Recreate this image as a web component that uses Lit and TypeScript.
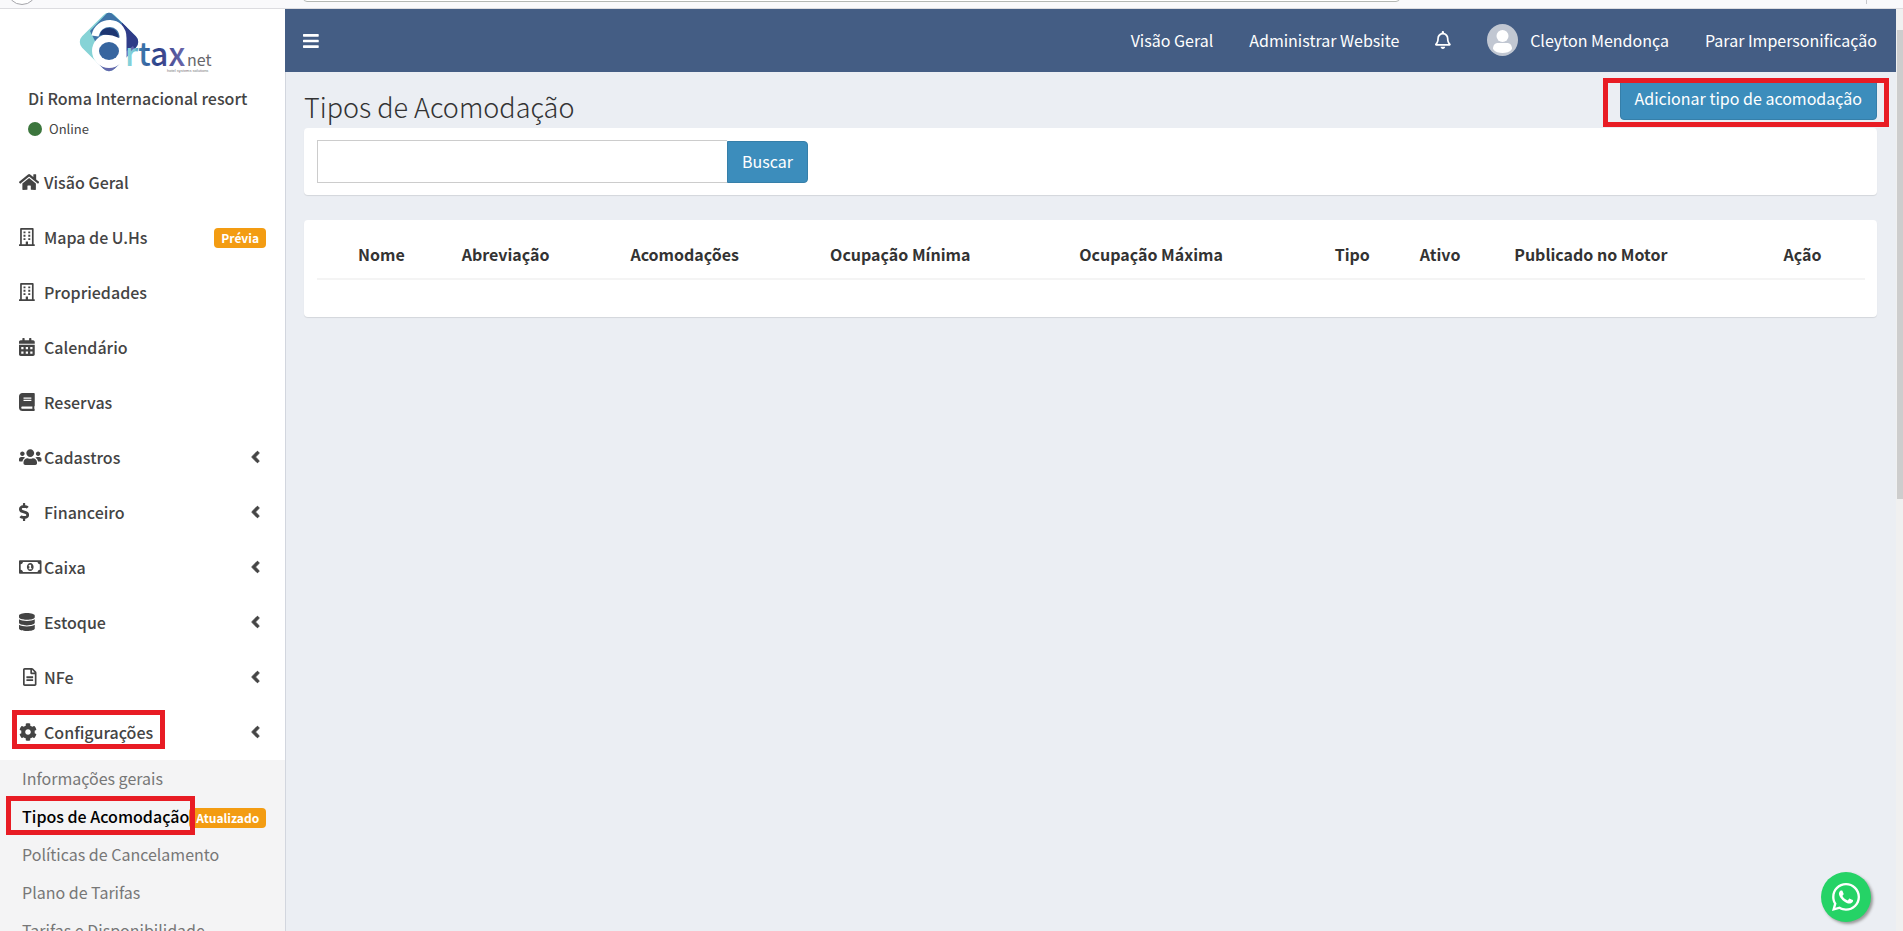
import { LitElement, html, css, svg, nothing, type TemplateResult } from "lit";
import { customElement, property } from "lit/decorators.js";
import { classMap } from "lit/directives/class-map.js";

interface Glyph {
  w: number;
  body: TemplateResult;
}

const glyphs: Record<string, Glyph> = {
  bars: {
    w: 448,
    body: svg`<path d="M16 132h416c8.8 0 16-7.2 16-16V76c0-8.8-7.2-16-16-16H16C7.2 60 0 67.200 0 76v40c0 8.800 7.200 16 16 16zm0 160h416c8.800 0 16-7.200 16-16v-40c0-8.800-7.200-16-16-16H16c-8.800 0-16 7.200-16 16v40c0 8.800 7.200 16 16 16zm0 160h416c8.800 0 16-7.200 16-16v-40c0-8.800-7.200-16-16-16H16c-8.800 0-16 7.200-16 16v40c0 8.800 7.200 16 16 16z"/>`,
  },
  home: {
    w: 576,
    body: svg`<path d="M280.37 148.26L96 300.11V464a16 16 0 0 0 16 16l112.06-.29a16 16 0 0 0 15.92-16V368a16 16 0 0 1 16-16h64a16 16 0 0 1 16 16v95.64a16 16 0 0 0 16 16.05L464 480a16 16 0 0 0 16-16V300L295.67 148.26a12.19 12.19 0 0 0-15.3 0zM571.6 251.47L488 182.56V44.05a12 12 0 0 0-12-12h-56a12 12 0 0 0-12 12v72.61L318.47 43a48 48 0 0 0-61 0L4.34 251.47a12 12 0 0 0-1.6 16.9l25.5 31A12 12 0 0 0 45.15 301l235.22-193.74a12.19 12.19 0 0 1 15.3 0L530.9 301a12 12 0 0 0 16.9-1.6l25.5-31a12 12 0 0 0-1.7-16.93z"/>`,
  },
  building: {
    w: 448,
    body: svg`<path fill-rule="evenodd" d="M56 0h336c13 0 24 11 24 24v440h20c7 0 12 5 12 12v36H0v-36c0-7 5-12 12-12h20V24C32 11 43 0 56 0zM80 48v415h112v-67c0-7 5-12 12-12h40c7 0 12 5 12 12v67h112V48z"/>
      <path d="M128 96h56v56h-56zM264 96h56v56h-56zM128 192h56v56h-56zM264 192h56v56h-56zM128 288h56v56h-56zM264 288h56v56h-56z"/>`,
  },
  calendar: {
    w: 448,
    body: svg`<path fill-rule="evenodd" d="M0 464c0 26.500 21.500 48 48 48h352c26.500 0 48-21.500 48-48V192H0zM64 256h64v64H64zM192 256h64v64h-64zM320 256h64v64h-64zM64 384h64v64H64zM192 384h64v64h-64zM320 384h64v64h-64zM400 64h-48V16c0-8.800-7.200-16-16-16h-32c-8.800 0-16 7.200-16 16v48H160V16c0-8.800-7.200-16-16-16h-32c-8.800 0-16 7.200-16 16v48H48C21.500 64 0 85.500 0 112v48h448v-48c0-26.500-21.500-48-48-48z"/>`,
  },
  book: {
    w: 448,
    body: svg`<path d="M448 360V24c0-13.3-10.700-24-24-24H96C43 0 0 43 0 96v320c0 53 43 96 96 96h328c13.300 0 24-10.700 24-24v-16c0-7.500-3.500-14.300-8.900-18.700-4.200-15.400-4.200-59.300 0-74.700 5.400-4.300 8.900-11.100 8.900-18.600zM128 134c0-3.300 2.700-6 6-6h212c3.300 0 6 2.700 6 6v20c0 3.300-2.700 6-6 6H134c-3.300 0-6-2.700-6-6v-20zm0 64c0-3.300 2.700-6 6-6h212c3.300 0 6 2.700 6 6v20c0 3.300-2.700 6-6 6H134c-3.300 0-6-2.700-6-6v-20zm253.400 250H96c-17.700 0-32-14.300-32-32 0-17.600 14.400-32 32-32h285.400c-1.900 17.100-1.900 46.900 0 64z"/>`,
  },
  users: {
    w: 640,
    body: svg`<path d="M96 224c35.300 0 64-28.700 64-64s-28.700-64-64-64-64 28.700-64 64 28.700 64 64 64zm448 0c35.300 0 64-28.700 64-64s-28.700-64-64-64-64 28.700-64 64 28.700 64 64 64zm32 32h-64c-17.600 0-33.500 7.100-45.100 18.600 40.300 22.100 68.900 62 75.100 109.400h66c17.700 0 32-14.300 32-32v-32c0-35.300-28.700-64-64-64zm-256 0c61.900 0 112-50.100 112-112S381.900 32 320 32 208 82.100 208 144s50.100 112 112 112zm76.800 32h-8.300c-20.800 10-43.900 16-68.500 16s-47.600-6-68.500-16h-8.300C179.600 288 128 339.600 128 403.200V432c0 26.500 21.500 48 48 48h288c26.500 0 48-21.500 48-48v-28.800c0-63.600-51.600-115.200-115.200-115.200zm-223.700-13.400C161.500 263.100 145.600 256 128 256H64c-35.300 0-64 28.700-64 64v32c0 17.700 14.300 32 32 32h65.900c6.300-47.400 34.900-87.300 75.200-109.400z"/>`,
  },
  dollar: {
    w: 288,
    body: svg`<path d="M209.200 233.400l-108-31.600C88.700 198.200 80 186.500 80 173.500c0-16.300 13.200-29.500 29.500-29.500h66.300c12.200 0 24.200 3.700 34.200 10.500 6.100 4.100 14.300 3.100 19.500-2l34.800-34c7.100-6.900 6.100-18.400-1.800-24.500C238 74.800 207.400 64.100 176 64V16c0-8.800-7.200-16-16-16h-32c-8.800 0-16 7.200-16 16v48h-2.500C45.800 64-5.400 118.700.5 183.600c4.200 46.100 39.400 83.600 83.800 96.600l102.500 30c12.500 3.700 21.200 15.300 21.200 28.300 0 16.300-13.200 29.500-29.500 29.500h-66.300C100 368 88 364.300 78 357.500c-6.100-4.100-14.300-3.100-19.500 2l-34.800 34c-7.100 6.900-6.100 18.400 1.800 24.500 24.500 19.200 55.100 29.900 86.500 30v48c0 8.800 7.200 16 16 16h32c8.800 0 16-7.200 16-16v-48.200c46.600-.9 90.300-28.600 105.700-72.700 21.500-61.600-14.600-124.800-72.500-141.700z"/>`,
  },
  money: {
    w: 640,
    body: svg`<path fill-rule="evenodd" d="M32 64h576c18 0 32 14 32 32v320c0 18-14 32-32 32H32c-18 0-32-14-32-32V96c0-18 14-32 32-32zM112 112c0 35-29 64-64 64v160c35 0 64 29 64 64h416c0-35 29-64 64-64V176c-35 0-64-29-64-64z"/>
      <path fill-rule="evenodd" d="M320 144c53 0 96 50 96 112s-43 112-96 112-96-50-96-112 43-112 96-112zM300 192l-24 16v24h20v56h-20v32h88v-32h-20v-96z"/>`,
  },
  database: {
    w: 448,
    body: svg`<path d="M448 73.143v45.714C448 159.143 347.667 192 224 192S0 159.143 0 118.857V73.143C0 32.857 100.333 0 224 0s224 32.857 224 73.143zM448 176v102.857C448 319.143 347.667 352 224 352S0 319.143 0 278.857V176c48.125 33.143 136.208 48.572 224 48.572S399.874 209.143 448 176zm0 160v102.857C448 479.143 347.667 512 224 512S0 479.143 0 438.857V336c48.125 33.143 136.208 48.572 224 48.572S399.874 369.143 448 336z"/>`,
  },
  file: {
    w: 384,
    body: svg`<path d="M288 248v28c0 6.600-5.400 12-12 12H108c-6.600 0-12-5.400-12-12v-28c0-6.600 5.400-12 12-12h168c6.600 0 12 5.400 12 12zm-12 72H108c-6.600 0-12 5.400-12 12v28c0 6.600 5.400 12 12 12h168c6.600 0 12-5.400 12-12v-28c0-6.600-5.400-12-12-12zm108-188.100V464c0 26.500-21.500 48-48 48H48c-26.500 0-48-21.500-48-48V48C0 21.500 21.500 0 48 0h204.100C264.800 0 277 5.100 286 14.100L369.900 98c9 8.900 14.100 21.200 14.100 33.900zm-128-80V128h76.100L256 51.900zM336 464V176H232c-13.300 0-24-10.700-24-24V48H48v416h288z"/>`,
  },
  cog: {
    w: 512,
    body: svg`<path d="M487.400 315.700l-42.600-24.600c4.300-23.200 4.300-47 0-70.200l42.600-24.600c4.900-2.800 7.100-8.600 5.500-14-11.100-35.600-30-67.800-54.700-94.600-3.800-4.100-10-5.100-14.800-2.300L380.800 110c-17.900-15.400-38.500-27.300-60.800-35.100V25.800c0-5.600-3.900-10.500-9.400-11.700-36.700-8.200-74.300-7.800-109.200 0-5.500 1.200-9.400 6.100-9.400 11.700V75c-22.200 7.900-42.800 19.800-60.800 35.100L88.700 85.500c-4.900-2.800-11-1.900-14.800 2.300-24.700 26.700-43.600 58.900-54.700 94.600-1.700 5.400.6 11.200 5.500 14L67.300 221c-4.300 23.200-4.300 47 0 70.200l-42.600 24.600c-4.900 2.800-7.100 8.600-5.500 14 11.100 35.600 30 67.800 54.700 94.600 3.800 4.100 10 5.100 14.800 2.300l42.600-24.600c17.900 15.400 38.500 27.300 60.800 35.100v49.200c0 5.600 3.900 10.500 9.400 11.700 36.700 8.200 74.300 7.800 109.200 0 5.500-1.200 9.400-6.100 9.400-11.700v-49.200c22.200-7.900 42.800-19.800 60.800-35.100l42.600 24.600c4.900 2.800 11 1.900 14.800-2.300 24.700-26.700 43.600-58.900 54.700-94.600 1.500-5.500-.7-11.300-5.600-14.100zM256 336c-44.100 0-80-35.900-80-80s35.900-80 80-80 80 35.900 80 80-35.900 80-80 80z"/>`,
  },
  angle: {
    w: 256,
    body: svg`<path d="M31.700 239l136-136c9.400-9.400 24.600-9.400 33.900 0l22.600 22.600c9.400 9.400 9.400 24.600 0 33.900L127.900 256l96.400 96.400c9.400 9.400 9.400 24.600 0 33.900L201.700 409c-9.400 9.400-24.600 9.400-33.900 0l-136-136c-9.500-9.400-9.500-24.600-.1-34z" stroke="currentColor" stroke-width="24"/>`,
  },
  bell: {
    w: 448,
    body: svg`<path d="M439.390 362.290c-19.320-20.760-55.470-51.990-55.470-154.290 0-77.700-54.480-139.900-127.940-155.160V32c0-17.670-14.320-32-31.980-32s-31.980 14.330-31.980 32v20.840C118.560 68.100 64.080 130.300 64.080 208c0 102.300-36.150 133.530-55.470 154.290-6 6.450-8.660 14.160-8.610 21.710.11 16.400 12.980 32 32.100 32h383.800c19.120 0 32-15.600 32.100-32 .05-7.550-2.610-15.270-8.610-21.710zM67.530 368c21.220-27.970 44.420-74.330 44.530-159.420 0-.2-.06-.38-.06-.58 0-61.860 50.140-112 112-112s112 50.140 112 112c0 .2-.06.38-.06.58.11 85.100 23.310 131.460 44.530 159.420H67.530zM224 512c35.320 0 63.970-28.650 63.970-64H160.030c0 35.350 28.650 64 63.970 64z"/>`,
  },
  whatsapp: {
    w: 448,
    body: svg`<path d="M380.900 97.100C339 55.100 283.200 32 223.900 32c-122.400 0-222 99.600-222 222 0 39.100 10.200 77.300 29.600 111L0 480l117.700-30.900c32.400 17.700 68.900 27 106.100 27h.1c122.300 0 224.100-99.600 224.100-222 0-59.300-25.200-115-67.100-157zm-157 341.600c-33.200 0-65.700-8.900-94-25.700l-6.700-4-69.800 18.300L72 359.200l-4.400-7c-18.500-29.400-28.200-63.300-28.200-98.200 0-101.700 82.800-184.500 184.600-184.500 49.300 0 95.600 19.200 130.400 54.100 34.800 34.900 56.200 81.200 56.100 130.500 0 101.800-84.900 184.600-186.600 184.600zm101.200-138.200c-5.500-2.800-32.800-16.200-37.900-18-5.100-1.900-8.800-2.800-12.500 2.800-3.700 5.600-14.300 18-17.600 21.800-3.200 3.700-6.500 4.200-12 1.400-32.600-16.300-54-29.100-75.500-66-5.700-9.800 5.700-9.100 16.300-30.300 1.800-3.700.9-6.900-.5-9.700-1.400-2.800-12.500-30.100-17.100-41.200-4.500-10.800-9.100-9.300-12.500-9.500-3.200-.2-6.900-.2-10.600-.2-3.700 0-9.700 1.400-14.800 6.900-5.100 5.600-19.400 19-19.400 46.300 0 27.300 19.900 53.700 22.600 57.400 2.800 3.700 39.100 59.700 94.800 83.800 35.200 15.200 49 16.500 66.600 13.900 10.700-1.600 32.800-13.400 37.400-26.400 4.600-13 4.600-24.100 3.200-26.400-1.300-2.500-5-3.900-10.500-6.600z"/>`,
  },
};

@customElement("ui-icon")
class UiIcon extends LitElement {
  @property() name = "";

  static styles = css`
    :host { display: inline-flex; height: 18px; flex: none; }
    .glyph { height: 100%; width: auto; fill: currentColor; display: block; }
  `;

  render() {
    const g = glyphs[this.name];
    return html`<svg class="glyph" viewBox="0 0 ${g.w} 512" aria-hidden="true">${g.body}</svg>`;
  }
}

@customElement("artax-logo")
class ArtaxLogo extends LitElement {
  static styles = css`
    :host { display: block; }
    .logo { display: block; width: 136px; height: 62px; }
    .word { font: 500 32px "Noto Sans CJK SC", "Open Sans", sans-serif; }
    .net { font: 400 16px "Noto Sans CJK SC", "Open Sans", sans-serif; fill: #66666b; }
    .tag { font: 400 4px "Liberation Sans", sans-serif; fill: #77777b; }
  `;

  render() {
    return html`<svg class="logo" viewBox="78 11 136 62" role="img" aria-label="Artaxnet">
      <defs>
        <clipPath id="tile"><rect x="86" y="19" width="46" height="46" rx="8" transform="rotate(45 109 42)"/></clipPath>
        <linearGradient id="ink" x1="0" x2="1">
          <stop offset="0" stop-color="#8fdbe0"/><stop offset=".16" stop-color="#78c6d2"/>
          <stop offset=".26" stop-color="#3c79ac"/><stop offset=".55" stop-color="#2f3f88"/>
          <stop offset="1" stop-color="#6c68ac"/>
        </linearGradient>
      </defs>
      <g clip-path="url(#tile)">
        <rect x="78" y="11" width="62" height="62" fill="#86d3d6"/>
        <path d="M90 31l19-20 18 16v16H96z" fill="#3f74a8"/>
        <path d="M122 22l20 19-15 17h-8z" fill="#2f3c88"/>
        <path d="M119 57l14-11 2 4-14 16z" fill="#6468ac"/>
        <path d="M96 62l13-6 22 2-22 17z" fill="#6468ac"/>
      </g>
      <circle cx="109" cy="51" r="17" fill="#fff"/>
      <path d="M95 36C98 19 123 19 123 38V67" fill="none" stroke="#fff" stroke-width="7"/>
      <path d="M100 35c1-5 4-7 9-7 6 0 9 4 10 10-5-3-13-4-19-3z" fill="#1d3672"/>
      <ellipse cx="109" cy="51" rx="10" ry="9" fill="#37659f"/>
      <text class="word" x="125" y="66" fill="url(#ink)">rtax</text>
      <text class="net" x="187" y="66">net</text>
      <text class="tag" x="167" y="72">hotel systems solutions</text>
    </svg>`;
  }
}

interface MenuItem {
  label: string;
  icon: string;
  badge?: string;
  expandable?: boolean;
  marked?: boolean;
  inset?: boolean;
}

const menu: MenuItem[] = [
  { label: "Visão Geral", icon: "home" },
  { label: "Mapa de U.Hs", icon: "building", badge: "Prévia" },
  { label: "Propriedades", icon: "building" },
  { label: "Calendário", icon: "calendar" },
  { label: "Reservas", icon: "book" },
  { label: "Cadastros", icon: "users", expandable: true },
  { label: "Financeiro", icon: "dollar", expandable: true },
  { label: "Caixa", icon: "money", expandable: true },
  { label: "Estoque", icon: "database", expandable: true },
  { label: "NFe", icon: "file", expandable: true, inset: true },
  { label: "Configurações", icon: "cog", expandable: true, marked: true },
];

const submenu = [
  { label: "Informações gerais" },
  { label: "Tipos de Acomodação", active: true, badge: "Atualizado" },
  { label: "Políticas de Cancelamento" },
  { label: "Plano de Tarifas" },
  { label: "Tarifas e Disponibilidade" },
];

@customElement("side-menu")
class SideMenu extends LitElement {
  static styles = css`
    :host { display: block; background: #fff; overflow: hidden; color: #444; }
    a { color: inherit; text-decoration: none; }
    ul { list-style: none; margin: 0; padding: 0; }
    .brand { display: flex; padding: 2px 0 0 78px; }
    .user { padding: 11px 28px 0; }
    .resort { margin: 0; font-size: 16px; line-height: 28px; font-weight: 500; white-space: nowrap; }
    .status { display: flex; align-items: center; gap: 7px; padding-top: 8px; font-size: 13px; line-height: 18px; }
    .dot { width: 14px; height: 14px; border-radius: 50%; background: #3c763d; }
    .nav { padding-top: 17px; }
    .item { position: relative; box-sizing: border-box; display: flex; align-items: center; height: 55px; padding: 0 19px 2px; font-size: 16px; font-weight: 500; }
    .icon { width: 25px; display: flex; align-items: center; }
    .inset { padding-left: 4px; width: 21px; }
    .angle { margin-left: auto; margin-right: 6px; }
    .badge { margin: 3px 0 0 auto; background: #f39c12; color: #fff; border-radius: 4px; padding: 0 7px; font-size: 12px; line-height: 20px; font-weight: 700; }
    .sub { background: #f4f4f5; }
    .subitem { position: relative; box-sizing: border-box; display: flex; align-items: center; height: 38px; padding: 0 19px 2px 22px; font-size: 16px; color: #777; white-space: nowrap; }
    .active { color: #000; font-weight: 500; }
    .mark { position: absolute; border: 5px solid #e81c24; pointer-events: none; }
    .mark-item { left: 12px; right: 120px; top: 5px; height: 29px; }
    .mark-sub { left: 6px; right: 90px; top: -2px; height: 29px; }
  `;

  render() {
    return html`
      <a class="brand" href="#"><artax-logo></artax-logo></a>
      <div class="user">
        <p class="resort">Di Roma Internacional resort</p>
        <div class="status"><span class="dot"></span>Online</div>
      </div>
      <nav class="nav" aria-label="Menu principal">
        <ul>
          ${menu.map((m) => html`<li>
            <a class="item" href="#">
              <span class=${classMap({ icon: true, inset: !!m.inset })}><ui-icon name=${m.icon}></ui-icon></span>
              ${m.label}
              ${m.badge ? html`<span class="badge">${m.badge}</span>` : nothing}
              ${m.expandable ? html`<ui-icon class="angle" name="angle"></ui-icon>` : nothing}
              ${m.marked ? html`<span class="mark mark-item"></span>` : nothing}
            </a>
          </li>`)}
        </ul>
        <ul class="sub">
          ${submenu.map((s) => html`<li>
            <a class=${classMap({ subitem: true, active: !!s.active })} href="#">
              ${s.label}
              ${s.badge ? html`<span class="badge">${s.badge}</span>` : nothing}
              ${s.active ? html`<span class="mark mark-sub"></span>` : nothing}
            </a>
          </li>`)}
        </ul>
      </nav>`;
  }
}

@customElement("top-bar")
class TopBar extends LitElement {
  static styles = css`
    :host { display: block; background: #445d84; color: #fff; }
    .bar { display: flex; align-items: center; height: 63px; padding: 0 19px 0 18px; font-size: 16px; }
    .toggle { border: 0; background: none; color: inherit; padding: 0; display: flex; cursor: pointer; }
    .links { display: flex; align-items: center; gap: 36px; margin-left: auto; padding-bottom: 2px; }
    a { color: inherit; text-decoration: none; display: flex; align-items: center; gap: 12px; white-space: nowrap; }
    .avatar { width: 31px; height: 32px; display: block; }
  `;

  render() {
    return html`<header class="bar">
      <button class="toggle" aria-label="Alternar menu"><ui-icon name="bars"></ui-icon></button>
      <nav class="links" aria-label="Conta">
        <a href="#">Visão Geral</a>
        <a href="#">Administrar Website</a>
        <a href="#" aria-label="Notificações"><ui-icon name="bell"></ui-icon></a>
        <a href="#">
          <svg class="avatar" viewBox="0 0 31 32" aria-hidden="true">
            <ellipse cx="15.500" cy="16" rx="15.500" ry="16" fill="#c1c7d2"/>
            <circle cx="15.500" cy="12" r="6" fill="#fff"/>
            <path d="M6 25c0-4 2-6 5-6h9c3 0 5 2 5 6-2 3-6 4-9.500 4S8 28 6 25z" fill="#fff"/>
          </svg>
          Cleyton Mendonça
        </a>
        <a href="#">Parar Impersonificação</a>
      </nav>
    </header>`;
  }
}

const columns = [
  { label: "", width: 2 },
  { label: "Nome", width: 6.7 },
  { label: "Abreviação", width: 10.9 },
  { label: "Acomodações", width: 12.9 },
  { label: "Ocupação Mínima", width: 16.1 },
  { label: "Ocupação Máxima", width: 16.5 },
  { label: "Tipo", width: 5.5 },
  { label: "Ativo", width: 6.1 },
  { label: "Publicado no Motor", width: 17.4 },
  { label: "Ação", width: 5.9 },
];

@customElement("room-types")
class RoomTypes extends LitElement {
  static styles = css`
    :host { display: block; background: #ebeef3; border-left: 1px solid #d2d6de; color: #333; padding: 6px 19px 0 18px; }
    .head { display: flex; align-items: flex-start; justify-content: space-between; height: 50px; }
    h1 { margin: 0; padding-top: 11px; font-size: 27px; line-height: 36px; font-weight: 300; }
    button { font: inherit; color: #fff; background: #3c8dbc; border: 1px solid #367fa9; cursor: pointer; padding: 0 14px 2px; }
    .add { position: relative; height: 42px; border-radius: 4px; }
    .mark { position: absolute; inset: -1px -13px -8px -18px; border: 5px solid #e81c24; pointer-events: none; }
    .card { background: #fff; border-radius: 4px; box-shadow: 0 1px 1px rgba(0, 0, 0, 0.1); padding: 12px 12px 12px 13px; margin-bottom: 25px; }
    .search { display: flex; width: 491px; max-width: 100%; align-items: flex-end; }
    .field { flex: 1; min-width: 0; box-sizing: border-box; height: 43px; border: 1px solid #ccc; border-right: 0; padding: 0 15px; font: inherit; color: #555; background: #fff; outline: 0; }
    .go { height: 42px; border-radius: 0 4px 4px 0; }
    .list { padding-bottom: 12px; }
    table { width: 100%; table-layout: fixed; border-collapse: collapse; }
    th { text-align: left; font-weight: 700; padding: 7px 10px 9px; height: 30px; white-space: nowrap; border-bottom: 2px solid #f4f4f4; line-height: 30px; }
    .blank { height: 25px; padding: 0; }
  `;

  render() {
    return html`
      <div class="head">
        <h1>Tipos de Acomodação</h1>
        <button class="add">Adicionar tipo de acomodação<span class="mark"></span></button>
      </div>
      <form class="card" @submit=${(e: Event) => e.preventDefault()}>
        <div class="search">
          <input class="field" type="text" aria-label="Buscar tipo de acomodação" />
          <button class="go">Buscar</button>
        </div>
      </form>
      <div class="card list">
        <table>
          <colgroup>${columns.map((c) => html`<col style="width:${c.width}%" />`)}</colgroup>
          <thead><tr>${columns.map((c) => html`<th scope="col">${c.label}</th>`)}</tr></thead>
          <tbody><tr><td class="blank" colspan="10"></td></tr></tbody>
        </table>
      </div>`;
  }
}

@customElement("app-root")
class AppRoot extends LitElement {
  static styles = css`
    :host { display: flex; flex-direction: column; height: 100vh; overflow: hidden; position: relative; font-family: "Noto Sans CJK SC", "Noto Sans", sans-serif; font-size: 16px; line-height: 24px; }
    .chrome { display: flex; align-items: flex-start; flex: none; box-sizing: border-box; height: 9px; padding: 0 36px 0 7px; background: #f9f9fb; border-bottom: 1px solid #dcdce0; overflow: hidden; }
    .back { box-sizing: border-box; width: 30px; height: 30px; margin-top: -25px; border: 1px solid #a5a5aa; border-radius: 50%; background: #fff; }
    .address { box-sizing: border-box; width: 59%; height: 10px; margin: -8px auto 0 266px; border: 1px solid #b4b8b4; border-radius: 0 0 4px 4px; background: #fff; }
    .split { width: 1px; height: 4px; background: #c8c8cc; }
    .shell { flex: 1; min-height: 0; display: flex; }
    side-menu { width: 285px; flex: none; }
    .main { flex: 1; min-width: 0; display: flex; flex-direction: column; }
    room-types { flex: 1; }
    .track { width: 7px; flex: none; background: #f0f0f0; padding: 21px 0 0 1px; box-sizing: border-box; }
    .thumb { height: 52%; background: #cdcdcd; }
    .chat { position: absolute; right: 32px; bottom: 9px; width: 50px; height: 50px; border-radius: 50%; background: #25d366; color: #fff; box-shadow: 2px 2px 3px #999; display: flex; align-items: center; justify-content: center; }
    .chat ui-icon { height: 32px; }
  `;

  render() {
    return html`
      <div class="chrome"><span class="back"></span><span class="address"></span><span class="split"></span></div>
      <div class="shell">
        <side-menu></side-menu>
        <main class="main">
          <top-bar></top-bar>
          <room-types></room-types>
        </main>
        <div class="track"><div class="thumb"></div></div>
      </div>
      <a class="chat" href="#" aria-label="WhatsApp"><ui-icon name="whatsapp"></ui-icon></a>`;
  }
}
